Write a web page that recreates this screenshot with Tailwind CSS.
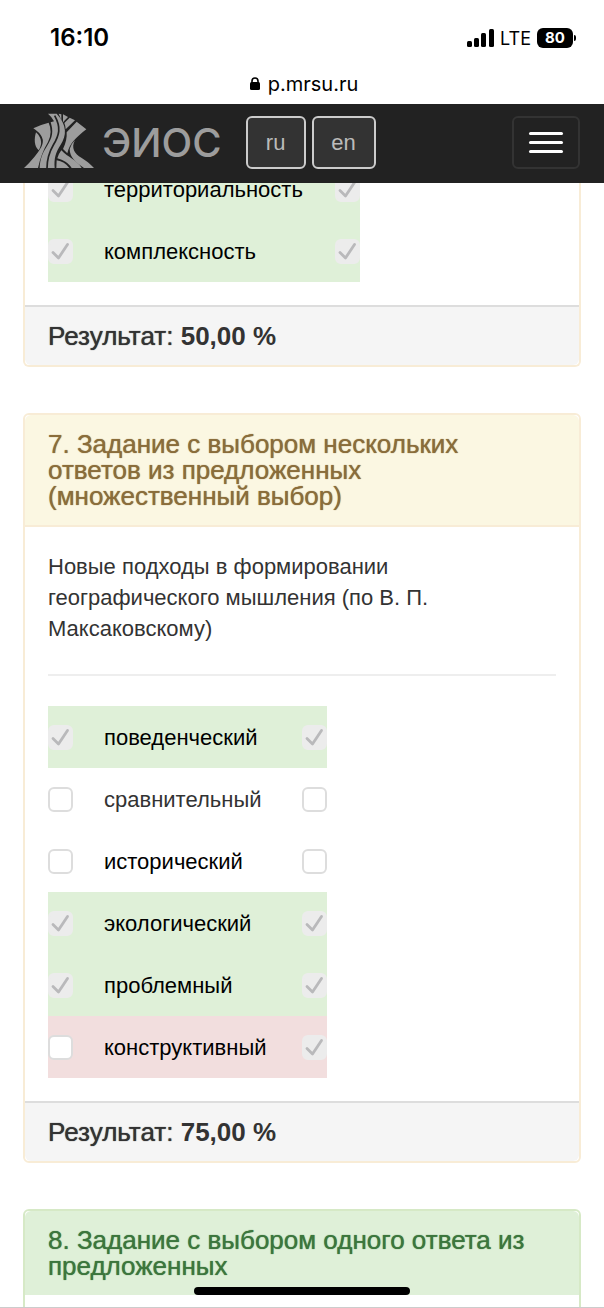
<!DOCTYPE html>
<html lang="ru">
<head>
    <meta charset="UTF-8">
    <meta name="viewport" content="width=device-width, initial-scale=1.0">
    <title>ЭИОС</title>
    <script src="https://cdn.jsdelivr.net/npm/@tailwindcss/browser@4"></script>
</head>
<body class="h-screen overflow-hidden flex flex-col bg-white font-['Liberation_Sans',sans-serif] text-[#333333]">
    <svg class="hidden">
        <symbol id="tick" viewBox="0 0 25 25">
            <path d="M5 13.5 L10.5 19 L19.5 5.5" fill="none" stroke="#b9b9bb" stroke-width="2.8" stroke-linecap="round" stroke-linejoin="round"/>
        </symbol>
    </svg>

    <!-- Status bar -->
    <div class="relative z-10 shrink-0 bg-white text-black font-[Inter,sans-serif]">
        <div class="flex items-center justify-between h-16 pt-3 pl-[50px] pr-7">
            <span class="text-[24px] font-semibold">16:10</span>
            <div class="flex items-center gap-[6px]">
                <svg class="w-[27px] h-[18px]" viewBox="0 0 27 18">
                    <rect x="0" y="12" width="5" height="6" rx="1.5"/>
                    <rect x="7" y="9" width="5" height="9" rx="1.5"/>
                    <rect x="14" y="4" width="5" height="14" rx="1.5"/>
                    <rect x="22" y="0" width="5" height="18" rx="1.5"/>
                </svg>
                <span class="text-[18px]">LTE</span>
                <span class="flex items-center gap-px">
                    <span class="w-9 h-5 rounded-md bg-black text-white text-[15px] leading-5 font-bold text-center">80</span>
                    <span class="w-[2px] h-[6px] rounded-r-full bg-black"></span>
                </span>
            </div>
        </div>
        <div class="flex items-center justify-center gap-2 h-10 pl-1">
            <svg class="w-[10px] h-[14px]" viewBox="0 0 10 14">
                <rect x="0" y="5" width="10" height="8" rx="1.5"/>
                <path d="M2 6V4a3 3 0 0 1 6 0v2" fill="none" stroke="#000" stroke-width="1.6"/>
            </svg>
            <span class="text-[20px]">p.mrsu.ru</span>
        </div>
    </div>

    <!-- Navbar -->
    <header class="relative z-10 shrink-0 flex items-center h-[79px] px-6 pb-[2px] bg-[#222222]">
        <a href="#" class="flex items-center gap-2 text-[#9d9d9d]">
            <svg class="w-[70px] h-[60px]" viewBox="10 8 210 180">
                <g fill="#9d9d9d">
                    <path d="M38 54Q62 42 84 37Q97 65 82 95Q62 128 52 173H10Q45 140 62 110Q78 80 38 54Z"/>
                    <path d="M46 66C40 85 40 108 54 120C64 104 66 85 46 66Z"/>
                    <path d="M82 10H108C140 45 138 75 120 103C104 128 100 145 102 173H57C58 145 66 128 76 112C98 80 98 62 90 36L100 33Q94 20 82 10Z"/>
                    <path d="M114 10L122 12V32Q119 20 114 10Z"/>
                    <path d="M127 12L142 20L127 36Z"/>
                    <path d="M147 22L163 30L135 57Q135 48 131 38Z"/>
                    <path d="M168 34L197 57C165 82 147 100 140 129L127 116C136 98 139 82 138 66Z"/>
                    <path d="M163 90C150 112 162 132 182 142C196 150 208 160 220 173H190C164 155 147 140 147 116Q150 102 163 90Z"/>
                    <path d="M122 120C142 142 168 148 183 173H153C143 157 128 149 110 144Q114 130 122 120Z"/>
                    <path d="M108 150Q132 154 146 173H107Z"/>
                </g>
                <path d="M102 16C122 52 116 74 98 104C84 128 79 148 79 174" fill="none" stroke="#222222" stroke-width="5"/>
            </svg>
            <span class="font-[Inter,sans-serif] text-[40px] leading-none font-medium">ЭИОС</span>
        </a>
        <div class="flex gap-[6px] ml-6">
            <button type="button" class="w-[60px] h-[53px] rounded-md border-2 border-[#cccccc] bg-[#333333] text-[22px] text-[#bbbbbb]">ru</button>
            <button type="button" class="w-16 h-[53px] rounded-md border-2 border-[#cccccc] bg-[#333333] text-[22px] text-[#bbbbbb]">en</button>
        </div>
        <button type="button" aria-label="Меню" class="ml-auto flex flex-col items-center justify-center gap-[6px] w-[68px] h-[53px] rounded-md border-2 border-[#333333]">
            <span class="w-[34px] h-[3px] rounded-full bg-white"></span>
            <span class="w-[34px] h-[3px] rounded-full bg-white"></span>
            <span class="w-[34px] h-[3px] rounded-full bg-white"></span>
        </button>
    </header>

    <!-- Список заданий, прокручен под шапку -->
    <main class="-mt-[25px] shrink-0 flex flex-col gap-[46px] px-[23px]">
        <section class="border-2 border-t-0 border-[#f8ecd6] rounded-b-md">
            <div class="px-[23px] pb-[23px]">
                <table class="text-[22px] text-black">
                    <tr class="h-[62px] bg-[#dff0d8]">
                        <td><span class="grid"><input type="checkbox" id="a1" checked class="peer col-start-1 row-start-1 appearance-none size-[25px] rounded-md border-2 border-[#dddddd] bg-white checked:border-[#ececec] checked:bg-[#ececec]"><svg class="col-start-1 row-start-1 size-[25px] invisible peer-checked:visible pointer-events-none"><use href="#tick"/></svg></span></td>
                        <td class="w-[262px] pl-[31px]"><label for="a1">территориальность</label></td>
                        <td><span class="grid"><input type="checkbox" aria-label="территориальность" checked class="peer col-start-1 row-start-1 appearance-none size-[25px] rounded-md border-2 border-[#dddddd] bg-white checked:border-[#ececec] checked:bg-[#ececec]"><svg class="col-start-1 row-start-1 size-[25px] invisible peer-checked:visible pointer-events-none"><use href="#tick"/></svg></span></td>
                    </tr>
                    <tr class="h-[62px] bg-[#dff0d8]">
                        <td><span class="grid"><input type="checkbox" id="a2" checked class="peer col-start-1 row-start-1 appearance-none size-[25px] rounded-md border-2 border-[#dddddd] bg-white checked:border-[#ececec] checked:bg-[#ececec]"><svg class="col-start-1 row-start-1 size-[25px] invisible peer-checked:visible pointer-events-none"><use href="#tick"/></svg></span></td>
                        <td class="pl-[31px]"><label for="a2">комплексность</label></td>
                        <td><span class="grid"><input type="checkbox" aria-label="комплексность" checked class="peer col-start-1 row-start-1 appearance-none size-[25px] rounded-md border-2 border-[#dddddd] bg-white checked:border-[#ececec] checked:bg-[#ececec]"><svg class="col-start-1 row-start-1 size-[25px] invisible peer-checked:visible pointer-events-none"><use href="#tick"/></svg></span></td>
                    </tr>
                </table>
            </div>
            <div class="px-[23px] py-4 border-t-2 border-[#dddddd] bg-[#f5f5f5] rounded-b-md text-[26px] leading-[26px]"><span class="[text-shadow:0_0_1px_currentColor]">Результат:</span> <b>50,00 %</b></div>
        </section>

        <section class="border-2 border-[#f8ecd6] rounded-md">
            <h4 class="pl-[23px] pr-10 py-4 border-b-2 border-[#f8ecd6] bg-[#fbf7e2] rounded-t-md text-[26px] leading-[26px] text-[#8a6d3b] [text-shadow:0_0_1px_currentColor]">7. Задание с выбором нескольких ответов из предложенных (множественный выбор)</h4>
            <div class="px-[23px] pt-6 pb-[23px]">
                <p class="text-[22px] leading-[31px]">Новые подходы в формировании географического мышления (по В. П. Максаковскому)</p>
                <hr class="my-[30px] border-t-2 border-[#eeeeee]">
                <table class="text-[22px] text-black">
                    <tr class="h-[62px] bg-[#dff0d8]">
                        <td><span class="grid"><input type="checkbox" id="b1" checked class="peer col-start-1 row-start-1 appearance-none size-[25px] rounded-md border-2 border-[#dddddd] bg-white checked:border-[#ececec] checked:bg-[#ececec]"><svg class="col-start-1 row-start-1 size-[25px] invisible peer-checked:visible pointer-events-none"><use href="#tick"/></svg></span></td>
                        <td class="w-[229px] pl-[31px]"><label for="b1">поведенческий</label></td>
                        <td><span class="grid"><input type="checkbox" aria-label="поведенческий" checked class="peer col-start-1 row-start-1 appearance-none size-[25px] rounded-md border-2 border-[#dddddd] bg-white checked:border-[#ececec] checked:bg-[#ececec]"><svg class="col-start-1 row-start-1 size-[25px] invisible peer-checked:visible pointer-events-none"><use href="#tick"/></svg></span></td>
                    </tr>
                    <tr class="h-[62px]">
                        <td><span class="grid"><input type="checkbox" id="b2" class="peer col-start-1 row-start-1 appearance-none size-[25px] rounded-md border-2 border-[#dddddd] bg-white checked:border-[#ececec] checked:bg-[#ececec]"><svg class="col-start-1 row-start-1 size-[25px] invisible peer-checked:visible pointer-events-none"><use href="#tick"/></svg></span></td>
                        <td class="pl-[31px] text-[#333333]"><label for="b2">сравнительный</label></td>
                        <td><span class="grid"><input type="checkbox" aria-label="сравнительный" class="peer col-start-1 row-start-1 appearance-none size-[25px] rounded-md border-2 border-[#dddddd] bg-white checked:border-[#ececec] checked:bg-[#ececec]"><svg class="col-start-1 row-start-1 size-[25px] invisible peer-checked:visible pointer-events-none"><use href="#tick"/></svg></span></td>
                    </tr>
                    <tr class="h-[62px]">
                        <td><span class="grid"><input type="checkbox" id="b3" class="peer col-start-1 row-start-1 appearance-none size-[25px] rounded-md border-2 border-[#dddddd] bg-white checked:border-[#ececec] checked:bg-[#ececec]"><svg class="col-start-1 row-start-1 size-[25px] invisible peer-checked:visible pointer-events-none"><use href="#tick"/></svg></span></td>
                        <td class="pl-[31px]"><label for="b3">исторический</label></td>
                        <td><span class="grid"><input type="checkbox" aria-label="исторический" class="peer col-start-1 row-start-1 appearance-none size-[25px] rounded-md border-2 border-[#dddddd] bg-white checked:border-[#ececec] checked:bg-[#ececec]"><svg class="col-start-1 row-start-1 size-[25px] invisible peer-checked:visible pointer-events-none"><use href="#tick"/></svg></span></td>
                    </tr>
                    <tr class="h-[62px] bg-[#dff0d8]">
                        <td><span class="grid"><input type="checkbox" id="b4" checked class="peer col-start-1 row-start-1 appearance-none size-[25px] rounded-md border-2 border-[#dddddd] bg-white checked:border-[#ececec] checked:bg-[#ececec]"><svg class="col-start-1 row-start-1 size-[25px] invisible peer-checked:visible pointer-events-none"><use href="#tick"/></svg></span></td>
                        <td class="pl-[31px]"><label for="b4">экологический</label></td>
                        <td><span class="grid"><input type="checkbox" aria-label="экологический" checked class="peer col-start-1 row-start-1 appearance-none size-[25px] rounded-md border-2 border-[#dddddd] bg-white checked:border-[#ececec] checked:bg-[#ececec]"><svg class="col-start-1 row-start-1 size-[25px] invisible peer-checked:visible pointer-events-none"><use href="#tick"/></svg></span></td>
                    </tr>
                    <tr class="h-[62px] bg-[#dff0d8]">
                        <td><span class="grid"><input type="checkbox" id="b5" checked class="peer col-start-1 row-start-1 appearance-none size-[25px] rounded-md border-2 border-[#dddddd] bg-white checked:border-[#ececec] checked:bg-[#ececec]"><svg class="col-start-1 row-start-1 size-[25px] invisible peer-checked:visible pointer-events-none"><use href="#tick"/></svg></span></td>
                        <td class="pl-[31px]"><label for="b5">проблемный</label></td>
                        <td><span class="grid"><input type="checkbox" aria-label="проблемный" checked class="peer col-start-1 row-start-1 appearance-none size-[25px] rounded-md border-2 border-[#dddddd] bg-white checked:border-[#ececec] checked:bg-[#ececec]"><svg class="col-start-1 row-start-1 size-[25px] invisible peer-checked:visible pointer-events-none"><use href="#tick"/></svg></span></td>
                    </tr>
                    <tr class="h-[62px] bg-[#f2dede]">
                        <td><span class="grid"><input type="checkbox" id="b6" class="peer col-start-1 row-start-1 appearance-none size-[25px] rounded-md border-2 border-[#dddddd] bg-white checked:border-[#ececec] checked:bg-[#ececec]"><svg class="col-start-1 row-start-1 size-[25px] invisible peer-checked:visible pointer-events-none"><use href="#tick"/></svg></span></td>
                        <td class="pl-[31px]"><label for="b6">конструктивный</label></td>
                        <td><span class="grid"><input type="checkbox" aria-label="конструктивный" checked class="peer col-start-1 row-start-1 appearance-none size-[25px] rounded-md border-2 border-[#dddddd] bg-white checked:border-[#ececec] checked:bg-[#ececec]"><svg class="col-start-1 row-start-1 size-[25px] invisible peer-checked:visible pointer-events-none"><use href="#tick"/></svg></span></td>
                    </tr>
                </table>
            </div>
            <div class="px-[23px] py-4 border-t-2 border-[#dddddd] bg-[#f5f5f5] rounded-b-md text-[26px] leading-[26px]"><span class="[text-shadow:0_0_1px_currentColor]">Результат:</span> <b>75,00 %</b></div>
        </section>

        <section class="border-2 border-[#d6e9c6] rounded-md">
            <h4 class="px-[23px] py-4 bg-[#dff0d8] rounded-t-md text-[26px] leading-[26px] text-[#3c763d] [text-shadow:0_0_1px_currentColor]">8. Задание с выбором одного ответа из предложенных</h4>
            <div class="h-16"></div>
        </section>
    </main>

    <!-- Home indicator -->
    <div class="fixed inset-x-0 bottom-0 z-20 flex justify-center pb-3 border-b border-[#cccccc]">
        <div class="w-[216px] h-2 rounded-full bg-black"></div>
    </div>
</body>
</html>
